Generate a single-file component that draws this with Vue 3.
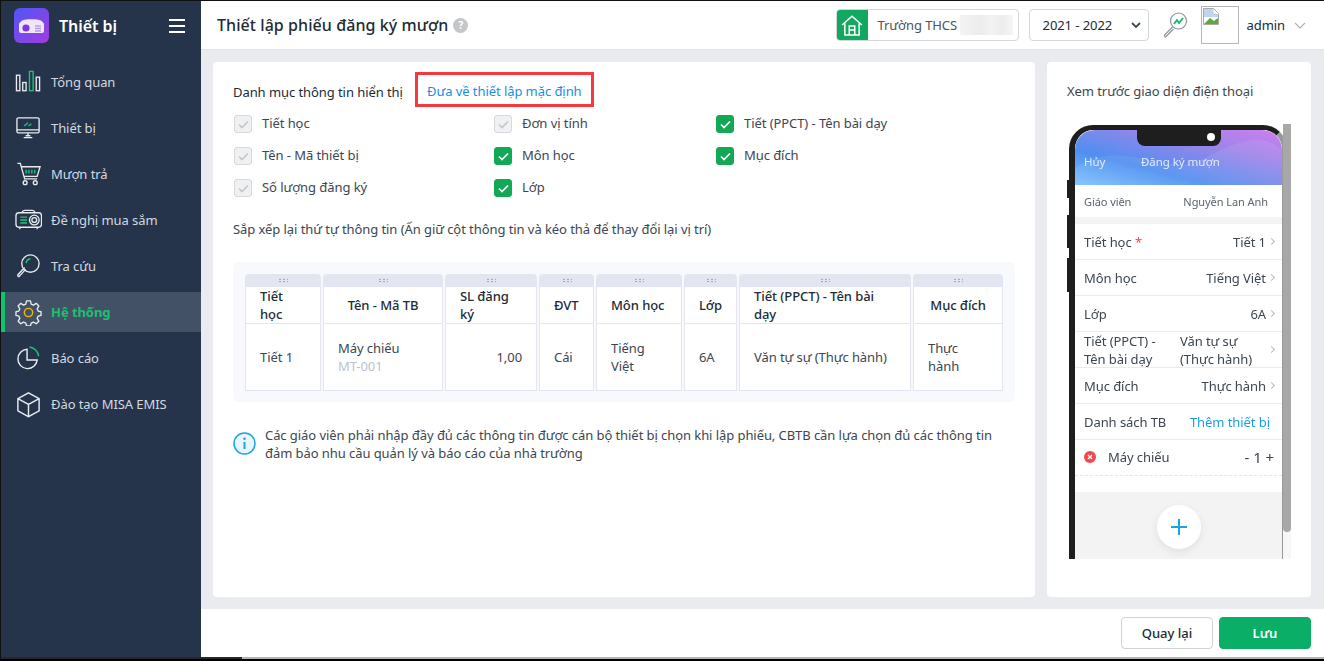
<script setup>
const nav = [
  { label: 'Tổng quan', icon: 'chart' },
  { label: 'Thiết bị', icon: 'monitor' },
  { label: 'Mượn trả', icon: 'cart' },
  { label: 'Đề nghị mua sắm', icon: 'projector' },
  { label: 'Tra cứu', icon: 'search' },
  { label: 'Hệ thống', icon: 'gear', active: true },
  { label: 'Báo cáo', icon: 'pie' },
  { label: 'Đào tạo MISA EMIS', icon: 'box' },
]
const checks = [
  { label: 'Tiết học', on: false },
  { label: 'Đơn vị tính', on: false },
  { label: 'Tiết (PPCT) - Tên bài dạy', on: true },
  { label: 'Tên - Mã thiết bị', on: false },
  { label: 'Môn học', on: true },
  { label: 'Mục đích', on: true },
  { label: 'Số lượng đăng ký', on: false },
  { label: 'Lớp', on: true },
]
const cols = [
  { head: 'Tiết học', body: ['Tiết 1'], cls: '' },
  { head: 'Tên - Mã TB', body: ['Máy chiếu'], code: 'MT-001', cls: 'center' },
  { head: 'SL đăng ký', body: ['1,00'], cls: 'num' },
  { head: 'ĐVT', body: ['Cái'], cls: '' },
  { head: 'Môn học', body: ['Tiếng Việt'], cls: '' },
  { head: 'Lớp', body: ['6A'], cls: '' },
  { head: 'Tiết (PPCT) - Tên bài dạy', body: ['Văn tự sự (Thực hành)'], cls: '' },
  { head: 'Mục đích', body: ['Thực hành'], cls: 'center' },
]
const rows = [
  { k: 'Môn học', v: 'Tiếng Việt' },
  { k: 'Lớp', v: '6A' },
]
</script>

<template>
  <div class="screen">
    <div class="body">
      <aside class="side">
        <div class="brand">
          <svg class="logo" viewBox="0 0 35 35">
            <defs>
              <linearGradient id="lg" x1="0" y1="0" x2="1" y2="1">
                <stop offset="0" stop-color="#4f56f5" />
                <stop offset="1" stop-color="#a23be0" />
              </linearGradient>
            </defs>
            <rect width="35" height="35" rx="6" fill="url(#lg)" />
            <path d="M8 12.5c3-1.800 16-1.800 19 0l3 3v7.500q0 2-2 2H7q-2 0-2-2v-7.500z" fill="#f0e6fb" />
            <circle cx="12" cy="20" r="3.600" fill="#7a38d8" />
            <path d="M21 18h6M21 20.500h6M21 23h6" stroke="#b79af0" stroke-width="1.300" />
          </svg>
          <span class="brand-name">Thiết bị</span>
          <span class="burger"><i></i><i></i><i></i></span>
        </div>
        <nav class="nav">
          <div v-for="n in nav" :key="n.label" class="item" :class="{ active: n.active }">
            <svg class="nav-icon" viewBox="0 0 28 28" fill="none" stroke="#e8ebf0" stroke-width="1.400">
              <template v-if="n.icon === 'chart'">
                <rect x="1.500" y="6.500" width="3.500" height="16" />
                <rect x="8" y="14" width="3.500" height="8.500" />
                <rect x="15" y="2.500" width="3.800" height="20" stroke="#1fc46f" />
                <rect x="22" y="8.500" width="3.500" height="14" />
              </template>
              <template v-else-if="n.icon === 'monitor'">
                <rect x="2" y="3" width="23" height="15.500" rx="1.500" />
                <path d="M2 15.500h23M13.500 18.500v3M9 23.500h9M11 21.500h5" />
                <path d="M9.500 11.500l4-3.500M14 11.500l3-2.500" stroke="#1fc46f" />
              </template>
              <template v-else-if="n.icon === 'cart'">
                <path d="M2.500 2.500h3l4.500 16h13M6.500 6h19.500l-3 10H9" />
                <path d="M11.500 9v4M14.500 9v4M17.500 9v4M20.500 9v4" stroke="#1fc46f" stroke-width="1.500" />
                <circle cx="10.500" cy="22.500" r="2" />
                <circle cx="21" cy="22.500" r="2" />
              </template>
              <template v-else-if="n.icon === 'projector'">
                <rect x="1" y="6" width="26.500" height="15" rx="3" />
                <path d="M7 6q1-2.500 3-2.500h8q2 0 3 2.500M5 21v2M23 21v2" />
                <path d="M5.500 10.500h7M5.500 13.500h7M5.500 16.500h7" stroke="#1fc46f" stroke-width="1.500" />
                <circle cx="20" cy="13.500" r="5" />
                <circle cx="20" cy="13.500" r="2.500" />
              </template>
              <template v-else-if="n.icon === 'search'">
                <circle cx="16" cy="11" r="9" />
                <path d="M10 15l-7 7.500q-.500 1.500 1 2l7-7.500" />
                <path d="M11.500 10.500q.500-4 4.500-4.500" stroke="#1fc46f" stroke-width="1.500" />
              </template>
              <template v-else-if="n.icon === 'gear'">
                <path d="M12 2h4l.800 3.300 2.300 1 2.900-1.800 2.700 2.800-1.700 2.800 1 2.400 3 .700v3.800l-3 .800-1 2.300 1.700 2.900-2.700 2.700-2.900-1.700-2.300 1-.800 3h-4l-.800-3-2.300-1-2.900 1.700-2.700-2.700 1.700-2.900-1-2.300-3-.800v-3.800l3-.700 1-2.400-1.700-2.800 2.700-2.800 2.900 1.800 2.300-1z" stroke-linejoin="round" />
                <circle cx="14" cy="14" r="4.300" stroke="#eab90f" stroke-width="1.500" />
              </template>
              <template v-else-if="n.icon === 'pie'">
                <path d="M12.500 4.500a10 10 0 1 0 10.500 11H12.500z" stroke-width="1.500" />
                <path d="M15 2a11 11 0 0 1 9.500 9.500" stroke="#1fc46f" stroke-width="1.500" />
              </template>
              <template v-else>
                <path d="M14 2l11 6v12.500l-11 6-11-6V8zM3 8l11 6 11-6M14 14v12.500" stroke-width="1.500" />
              </template>
            </svg>
            <span>{{ n.label }}</span>
          </div>
        </nav>
      </aside>

      <div class="right">
        <header class="top">
          <h1>Thiết lập phiếu đăng ký mượn</h1>
          <span class="help">?</span>
          <div class="school">
            <span class="school-ico">
              <svg width="22" height="22" viewBox="0 0 20 20" fill="none" stroke="#fff" stroke-width="1.400">
                <path d="M1 10l9-8 9 8M3.500 8.500V19h13V8.500M7.500 19v-8h5v8M7.500 14.500h5" />
              </svg>
            </span>
            <span class="school-name">Trường THCS</span>
            <span class="blur"></span>
          </div>
          <div class="year">
            <span>2021 - 2022</span>
            <svg width="10" height="7" viewBox="0 0 10 7" fill="none" stroke="#3b4a5a" stroke-width="1.800"><path d="M1 1l4 4 4-4" /></svg>
          </div>
          <svg class="lookup" width="28" height="28" viewBox="0 0 28 28" fill="none">
            <circle cx="17.500" cy="10" r="8" stroke="#8d959c" stroke-width="1.200" />
            <path d="M11.500 16l-8 8q-.500 1.500 1 2l8-8" stroke="#8d959c" stroke-width="1.200" />
            <path d="M13 13l3-4 2 3 4-5" stroke="#12b76a" stroke-width="1.800" />
          </svg>
          <div class="avatar">
            <svg width="16" height="17" viewBox="0 0 16 17">
              <path d="M.5.500h10l5 5v11H.5z" fill="#fff" stroke="#a9a9a9" />
              <path d="M1 1h9.500v5H15v3H1z" fill="#bfd4ef" />
              <path d="M1 16l6-6 4 3 4-3v6z" fill="#5ea83a" />
            </svg>
          </div>
          <span class="admin">admin</span>
          <svg class="chev" width="12" height="7" viewBox="0 0 12 7" fill="none" stroke="#a8adb4" stroke-width="1.100"><path d="M1 1l5 5 5-5" /></svg>
        </header>

        <main class="content">
          <section class="card settings">
            <div class="title-row">
              <span>Danh mục thông tin hiển thị</span>
              <a class="reset">Đưa về thiết lập mặc định</a>
            </div>
            <div class="checks">
              <label v-for="c in checks" :key="c.label" class="check">
                <span class="box" :class="{ on: c.on }">
                  <svg width="11" height="9" viewBox="0 0 11 9" fill="none" :stroke="c.on ? '#fff' : '#c3c6cb'" stroke-width="1.700"><path d="M1 4.500l3 3 6-6" /></svg>
                </span>
                <span class="check-text">{{ c.label }}</span>
              </label>
            </div>
            <p class="hint">Sắp xếp lại thứ tự thông tin (Ấn giữ cột thông tin và kéo thả để thay đổi lại vị trí)</p>
            <div class="table-wrap">
              <div class="tbl">
                <div v-for="c in cols" :key="c.head" class="col">
                  <div class="grip"><i></i></div>
                  <div class="th" :class="c.cls"><span>{{ c.head }}</span></div>
                  <div class="td" :class="c.cls">
                    <span>{{ c.body[0] }}</span>
                    <span v-if="c.code" class="code">{{ c.code }}</span>
                  </div>
                </div>
              </div>
            </div>
            <div class="info">
              <svg width="23" height="23" viewBox="0 0 23 23" fill="none">
                <circle cx="11.500" cy="11.500" r="10.500" stroke="#1aa4e8" stroke-width="1.500" fill="#e9f6fd" />
                <path d="M11.500 10v7" stroke="#1aa4e8" stroke-width="2" />
                <circle cx="11.500" cy="6.800" r="1.300" fill="#1aa4e8" />
              </svg>
              <p>Các giáo viên phải nhập đầy đủ các thông tin được cán bộ thiết bị chọn khi lập phiếu, CBTB cần lựa chọn đủ các thông tin đảm bảo nhu cầu quản lý và báo cáo của nhà trường</p>
            </div>
          </section>

          <section class="card preview">
            <div class="preview-title">Xem trước giao diện điện thoại</div>
            <div class="viewport">
              <div class="phone">
                <i class="side-btn b1"></i><i class="side-btn b2"></i><i class="side-btn b3"></i>
                <div class="screen-in">
                  <div class="ph-head">
                    <svg class="wave" viewBox="0 0 207 55" preserveAspectRatio="none">
                      <path d="M0 38C50 5 90 50 130 28S190 5 207 20V55H0z" fill="#fff" opacity=".08" />
                    </svg>
                    <span class="notch"><b></b></span>
                    <span class="cancel">Hủy</span>
                    <span class="ph-title">Đăng ký mượn</span>
                  </div>
                  <div class="ph-row teacher"><span>Giáo viên</span><span>Nguyễn Lan Anh</span></div>
                  <div class="ph-gap"></div>
                  <div class="ph-row"><span>Tiết học <em>*</em></span><span class="val">Tiết 1<u></u></span></div>
                  <div v-for="r in rows" :key="r.k" class="ph-row"><span>{{ r.k }}</span><span class="val">{{ r.v }}<u></u></span></div>
                  <div class="ph-row ppct">
                    <span class="w1">Tiết (PPCT) - Tên bài dạy</span>
                    <span class="w2">Văn tự sự (Thực hành)</span><u></u>
                  </div>
                  <div class="ph-row"><span>Mục đích</span><span class="val">Thực hành<u></u></span></div>
                  <div class="ph-row"><span>Danh sách TB</span><span class="add">Thêm thiết bị</span></div>
                  <div class="ph-row item-row">
                    <span class="x">
                      <svg width="12" height="12" viewBox="0 0 12 12"><circle cx="6" cy="6" r="6" fill="#f4474b" /><path d="M4 4l4 4M8 4l-4 4" stroke="#fff" stroke-width="1.300" /></svg>
                      Máy chiếu
                    </span>
                    <span class="qty">- 1 +</span>
                  </div>
                  <div class="ph-space"></div>
                  <div class="ph-bottom">
                    <span class="fab">
                      <svg width="18" height="18" viewBox="0 0 18 18" stroke="#17a5e6" stroke-width="2"><path d="M9 1v16M1 9h16" /></svg>
                    </span>
                  </div>
                </div>
              </div>
              <div class="scroll"><i></i></div>
            </div>
          </section>
        </main>

        <footer class="foot">
          <button class="btn">Quay lại</button>
          <button class="btn save">Lưu</button>
        </footer>
      </div>
    </div>
    <div class="edge"></div>
  </div>
</template>

<style>
html, body { margin: 0; padding: 0; background: #000; }
</style>

<style scoped>
.screen {
  width: 1324px; height: 661px; box-sizing: border-box; display: flex; flex-direction: column; overflow: hidden;
  border-top: 1px solid #111; border-left: 1px solid #111; border-bottom: 2px solid #000;
  font-family: "Noto Sans", "Open Sans", sans-serif; font-size: 13px; letter-spacing: -.07px; color: #212b36; background: #fff;
}
.body { flex: 1; min-height: 0; display: flex; }
.edge { height: 2px; flex: none; background: linear-gradient(90deg, #26282c 241px, #b5b5b5 241px); }
.side { width: 200px; flex: none; background: #25344b; color: #d4d9e0; }
.brand { height: 50px; display: flex; align-items: center; padding-left: 13px; }
.logo { width: 35px; height: 35px; margin-top: -1px; }
.brand-name { margin-left: 10px; font-size: 16px; font-weight: 600; color: #fff; }
.burger { margin-left: 52px; width: 16px; display: flex; flex-direction: column; gap: 4px; }
.burger i { display: block; height: 2px; background: #fff; }
.nav { margin-top: 11px; display: flex; flex-direction: column; gap: 6px; }
.item { height: 40px; display: flex; align-items: center; padding-left: 14px; box-sizing: border-box; }
.item span { margin-left: 9px; }
.nav-icon { width: 27px; height: 27px; flex: none; }
.item.active { background: #435166; color: #1fbf70; font-weight: 700; box-shadow: inset 4px 0 0 #12c46b; }
.right { flex: 1; min-width: 0; display: flex; flex-direction: column; background: #e9ebef; }
.top { height: 49px; box-sizing: border-box; flex: none; display: flex; align-items: center; padding-left: 16px; background: #fff; border-bottom: 1px solid #dfe1e5; }
.top h1 { margin: 0; font-size: 16px; font-weight: 500; letter-spacing: .07px; color: #212b36; }
.help { margin-left: 5px; width: 15px; height: 15px; border-radius: 50%; background: #c4c6ca; color: #fff; font-size: 10px; font-weight: 700; line-height: 15px; text-align: center; }
.school { margin-left: auto; width: 183px; height: 32px; box-sizing: border-box; border: 1px solid #d3d6da; border-radius: 4px; display: flex; align-items: center; overflow: hidden; }
.school-ico { width: 32px; height: 32px; flex: none; margin-left: -1px; background: #12a85f; display: flex; align-items: center; justify-content: center; }
.school-name { margin-left: 10px; color: #4a5560; }
.blur { margin-left: 3px; width: 53px; height: 20px; background: linear-gradient(90deg, #f4f4f4, #ececec 40%, #f3f3f3 60%, #ececec 80%, #f6f6f6); }
.year { margin-left: 10px; width: 120px; height: 32px; box-sizing: border-box; border: 1px solid #d3d6da; border-radius: 4px; padding: 0 7px 0 13px; display: flex; align-items: center; justify-content: space-between; }
.lookup { margin-left: 12px; }
.avatar { margin-left: 12px; width: 38px; height: 38px; box-sizing: border-box; border: 1px solid #b5b5b5; padding: 1px 0 0 1px; }
.avatar svg { display: block; }
.admin { margin-left: 8px; }
.chev { margin: 1px 18px 0 9px; }
.content { flex: 1; min-height: 0; display: flex; gap: 12px; padding: 12px 13px 12px 12px; }
.card { background: #fff; border-radius: 4px; }
.settings { flex: 1; min-width: 0; padding: 10px 20px 0 20px; }
.title-row { display: flex; align-items: center; height: 35px; }
.title-row > span { padding-top: 4px; }
.reset { margin-left: 12px; box-sizing: border-box; width: 179px; height: 35px; border: 3px solid #f5393f; color: #1a8fe0; line-height: 33px; text-align: center; white-space: nowrap; }
.checks { display: grid; grid-template-columns: 260px 222px 1fr; grid-auto-rows: 32px; margin-top: 1px; }
.check { display: flex; align-items: center; gap: 10px; color: #3c4650; }
.check-text { padding-bottom: 2px; }
.box { width: 16px; height: 16px; margin-left: 1px; border: 1px solid #d5d8dc; background: #f0f1f3; border-radius: 3px; display: flex; align-items: center; justify-content: center; }
.box.on { background: #12a855; border-color: #12a855; }
.hint { margin: 16px 0 0; line-height: 18px; color: #3c4650; }
.table-wrap { margin-top: 24px; height: 140px; box-sizing: border-box; background: #f8f9fc; border-radius: 4px; padding: 12px 12px 0; }
.tbl { display: grid; grid-template-columns: 76px 120px 92px 55px 86px 53px 172px 90px; gap: 2px; }
.col { display: flex; flex-direction: column; }
.grip { height: 13px; background: #e3e5f1; border-radius: 4px 4px 0 0; display: flex; align-items: center; justify-content: center; }
.grip i { width: 10px; height: 5px; background-image: radial-gradient(#8d90a0 .7px, transparent .9px); background-size: 4px 2.500px; }
.th { height: 37px; box-sizing: border-box; background: #fff; border: 1px solid #e3e5f1; border-top: 0; padding-left: 14px; padding-right: 15px; display: flex; align-items: center; line-height: 18px; font-weight: 500; color: #212b36; }
.th.center { justify-content: center; padding: 0; }
.td { height: 67px; box-sizing: border-box; background: #fff; border: 1px solid #e3e5f1; border-top: 0; padding: 0 15px 0 14px; display: flex; flex-direction: column; justify-content: center; align-items: flex-start; line-height: 18px; color: #3c4650; }
.td.num { align-items: flex-end; padding-right: 14px; }
.code { color: #b8c4d2; }
.info { margin-top: 24px; display: flex; gap: 9px; }
.info svg { flex: none; margin-top: 6px; }
.info p { margin: 0; width: 742px; line-height: 18px; color: #3c4650; }
.preview { width: 264px; flex: none; padding: 0 0 0 20px; box-sizing: border-box; display: flex; flex-direction: column; }
.preview-title { margin-top: 20px; line-height: 18px; color: #3c4650; }
.viewport { margin-top: 24px; height: 435px; display: flex; position: relative; overflow: hidden; }
.phone { position: relative; width: 218px; height: 480px; margin: 1px 0 0 2px; flex: none; box-sizing: border-box; border: 5px solid #1e1e1e; border-right-color: #999; border-left-width: 6px; border-bottom: 0; border-radius: 24px 24px 0 0; }
.side-btn { position: absolute; left: -8px; width: 2px; background: #1e1e1e; }
.b1 { top: 50px; height: 18px; } .b2 { top: 85px; height: 33px; } .b3 { top: 128px; height: 34px; }
.screen-in { height: 100%; background: #fff; border-radius: 20px 20px 0 0; overflow: hidden; filter: blur(.25px); }
.ph-head { position: relative; height: 55px; background: linear-gradient(to top right, #7cc3ff 0%, #4f8ff0 32%, #9a85ea 68%, #cf7eee 100%); color: #e3ebfb; }
.wave { position: absolute; inset: 0; width: 100%; height: 100%; }
.notch { position: absolute; left: 62px; top: 0; width: 84px; height: 16px; background: #1e1e1e; border-radius: 0 0 8px 8px; }
.notch b { position: absolute; right: 6px; top: 3px; width: 8px; height: 8px; border-radius: 50%; background: #fff; }
.cancel, .ph-title { position: absolute; top: 24px; font-size: 11.500px; line-height: 16px; }
.cancel { left: 9px; }
.ph-title { left: 66px; }
.ph-row { height: 36px; box-sizing: border-box; border-bottom: 1px solid #e9ebf0; padding: 0 8px 0 9px; display: flex; align-items: center; justify-content: space-between; font-size: 13px; color: #3c4650; }
.teacher { height: 32px; border: 0; font-size: 11px; color: #5a6470; padding-right: 14px; }
.ph-gap { height: 7px; background: #f3f3f3; }
.ph-row em { color: #f4474b; font-style: normal; }
.val { display: flex; align-items: center; }
u { display: block; width: 4px; height: 4px; margin-left: 3px; border-top: 1px solid #b8bcc2; border-right: 1px solid #b8bcc2; transform: rotate(45deg); flex: none; }
.ppct { justify-content: flex-start; line-height: 18px; }
.ppct u { margin-left: auto; }
.w1 { width: 85px; margin-right: 11px; flex: none; }
.w2 { width: 84px; flex: none; }
.add { color: #1a9fe8; margin-right: 4px; }
.item-row { border-bottom: 1px dashed #e3e5ea; padding-bottom: 2px; }
.x { display: flex; align-items: center; gap: 12px; }
.qty { font-size: 15px; }
.ph-space { height: 16px; }
.ph-bottom { height: 68px; background: #f3f3f3; display: flex; justify-content: center; padding-top: 13px; box-sizing: border-box; }
.fab { width: 44px; height: 44px; border-radius: 50%; background: #fff; box-shadow: 0 3px 8px rgba(0,0,0,.08); display: flex; align-items: center; justify-content: center; }
.scroll { position: absolute; left: 216px; top: 0; width: 8px; height: 100%; background: #f7f7f7; }
.scroll i { display: block; height: 408px; background: #a8a8a8; border-radius: 0 0 4px 4px; }
.foot { height: 48px; flex: none; background: #fff; display: flex; justify-content: flex-end; align-items: center; gap: 6px; padding-right: 13px; }
.btn { width: 92px; height: 32px; box-sizing: border-box; border: 1px solid #cfd2d6; border-radius: 4px; background: #fff; font: 500 13px "Noto Sans", sans-serif; color: #212b36; }
.save { background: #0aae66; border-color: #0aae66; color: #fff; font-weight: 600; }
</style>
